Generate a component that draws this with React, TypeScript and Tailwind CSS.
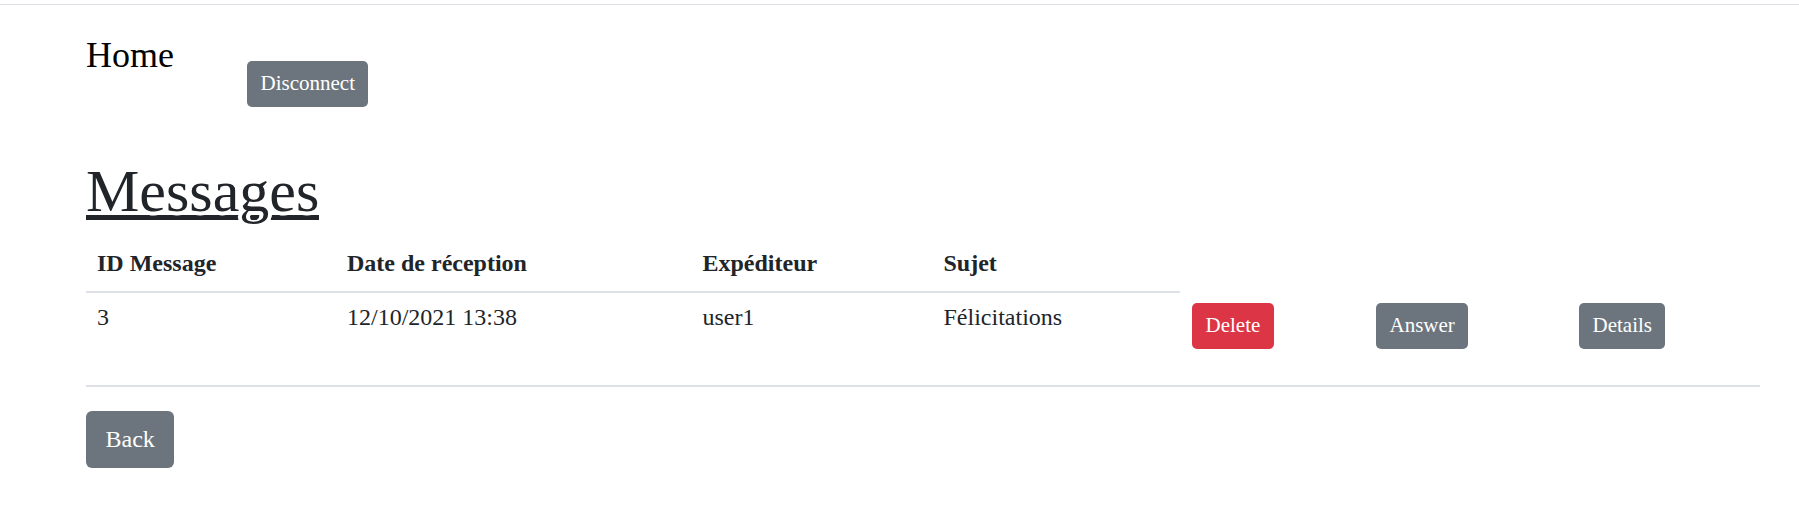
const messages = [
  { id: 3, date: "12/10/2021 13:38", from: "user1", subject: "Félicitations" },
];

const btnSm =
  "flex h-[46px] items-center rounded-[5px] px-[13.5px] text-[21px] leading-[31.5px] text-white";

const App = () => {
  return (
    <div className="min-h-screen bg-white pt-[4px] font-['Liberation_Serif',serif] text-[#212529]">
      <div className="h-px bg-[#dee2e6]" />

      <main className="pl-[86px] pr-[39px]">
        <div className="mt-[32px] flex items-start">
          <div className="w-[161px] text-[36px] leading-[36px] text-black">Home</div>
          <button className={`${btnSm} mt-[24px] bg-[#6c757d]`}>Disconnect</button>
        </div>

        {/* thick underline, white halo mimics skip-ink round the g */}
        <h1 className="mt-[48px] text-[60px] leading-[72px]">
          <span className="inline-block border-b-[5px] border-[#212529] leading-[48px] [text-shadow:4px_0_#fff,-4px_0_#fff,0_4px_#fff,3px_3px_#fff,-3px_3px_#fff]">
            Messages
          </span>
        </h1>

        <div className="grid grid-cols-[250px_355.5px_241px_247.5px_184px_203px_193px] text-[24px] leading-[36px]">
          <div className="border-b-2 border-[#dee2e6] pt-[18px] pb-[9.5px] pl-[11px] font-bold">ID Message</div>
          <div className="border-b-2 border-[#dee2e6] pt-[18px] pb-[9.5px] pl-[11px] font-bold">Date de réception</div>
          <div className="border-b-2 border-[#dee2e6] pt-[18px] pb-[9.5px] pl-[11px] font-bold">Expéditeur</div>
          <div className="border-b-2 border-[#dee2e6] pt-[18px] pb-[9.5px] pl-[11px] font-bold">Sujet</div>
          <div />
          <div />
          <div />

          {messages.map((m) => (
            <div key={m.id} className="contents">
              <div className="pt-[6px] pl-[11px]">{m.id}</div>
              <div className="pt-[6px] pl-[11px]">{m.date}</div>
              <div className="pt-[6px] pl-[11px]">{m.from}</div>
              <div className="pt-[6px] pl-[11px]">{m.subject}</div>
              <div className="flex items-start pt-[10px] pl-[12px]">
                <button className={`${btnSm} bg-[#dc3545]`}>Delete</button>
              </div>
              <div className="flex items-start pt-[10px] pl-[12px]">
                <button className={`${btnSm} bg-[#6c757d]`}>Answer</button>
              </div>
              <div className="flex items-start pt-[10px] pl-[12px]">
                <button className={`${btnSm} bg-[#6c757d]`}>Details</button>
              </div>
            </div>
          ))}
        </div>

        <div className="mt-[36px] h-[2px] bg-[#dee2e6]" />

        <button className="mt-[24px] flex h-[57px] items-center rounded-[6px] bg-[#6c757d] px-[19.5px] text-[24px] leading-[36px] text-white">
          Back
        </button>
      </main>
    </div>
  );
};

export default App;
